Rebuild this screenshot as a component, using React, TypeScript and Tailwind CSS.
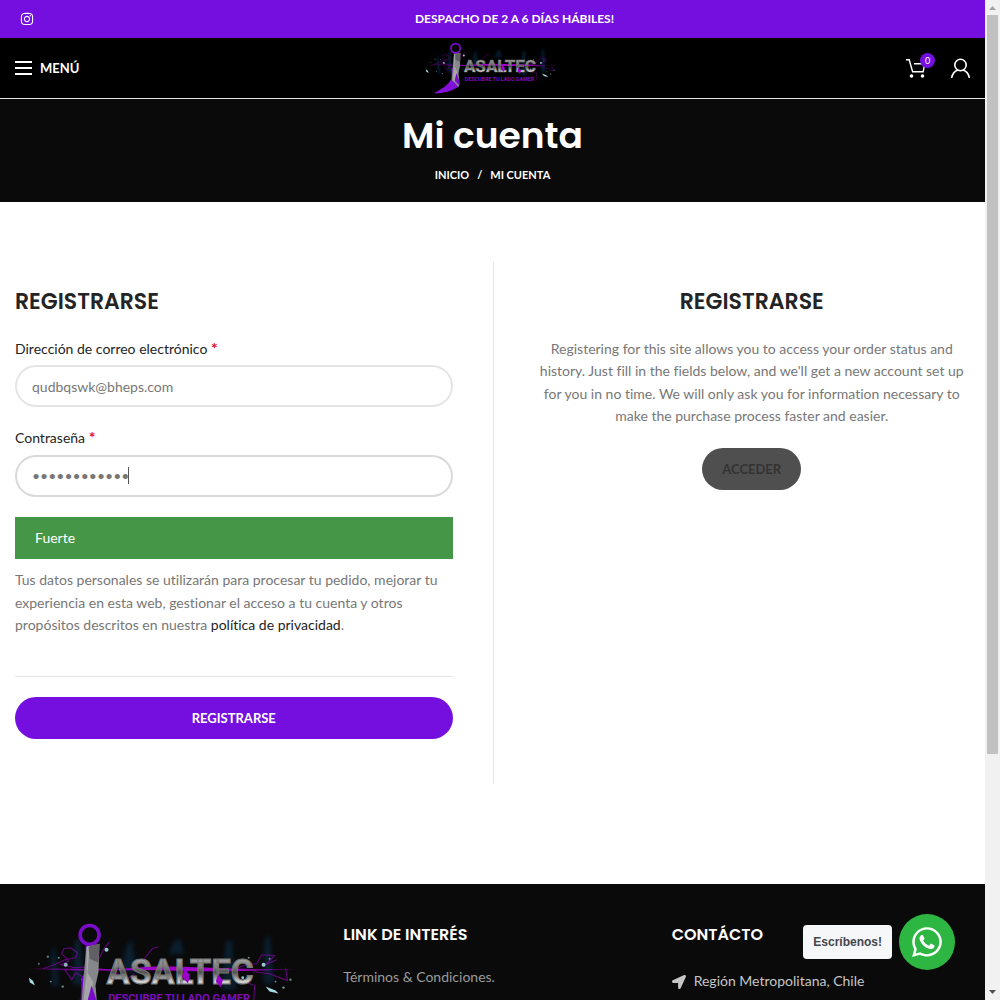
import { FaInstagram, FaLocationArrow, FaWhatsapp } from "react-icons/fa";

const sparks: [number, number, number, number][] = [
  [51, 51, 2, 0.8], [33, 43, 1.2, 0.5], [24, 50, 1, 0.5], [44, 44, 1, 0.6], [92, 36, 2, 0.9],
  [68, 66, 1.4, 0.6], [250, 51, 2, 0.9], [256, 45, 1, 0.6], [229, 64, 1.4, 0.9], [277, 66, 1.2, 0.6],
  [262, 68, 1, 0.6], [36, 68, 1, 0.6], [235, 44, 1, 0.6], [270, 74, 1.2, 0.7], [48, 73, 1.2, 0.6],
];

function Logo({ id, className }: { id: string; className: string }) {
  return (
    <svg viewBox="0 0 300 123" className={className} role="img" aria-label="Jasaltec">
      <defs>
        <linearGradient id={id + "-steel"} x1="0" y1="0" x2="0" y2="1">
          <stop offset="0.2" stopColor="#a0a0a0" />
          <stop offset="0.4" stopColor="#7a7a7a" />
          <stop offset="0.52" stopColor="#505050" />
          <stop offset="0.75" stopColor="#d2d2d2" />
          <stop offset="1" stopColor="#8a8a8a" />
        </linearGradient>
        <linearGradient id={id + "-beam"} x1="0" x2="1">
          <stop offset="0" stopColor="#a400c8" stopOpacity="0" />
          <stop offset="0.25" stopColor="#a000c8" />
          <stop offset="0.75" stopColor="#a000c8" />
          <stop offset="1" stopColor="#a400c8" stopOpacity="0" />
        </linearGradient>
        <filter id={id + "-glow"} x="-20%" y="-20%" width="140%" height="140%">
          <feGaussianBlur stdDeviation="2" />
        </filter>
      </defs>
      <g fill="#073f68" opacity="0.4" filter={"url(#" + id + "-glow)"}>
        <path d="M36 44 40 30 44 72 38 74ZM60 28 66 24 69 74 58 70ZM112 32 118 25 122 58H106ZM160 28 166 24 170 40H154ZM212 28 218 26 222 76H208ZM251 26 256 20 260 70H250Z" />
      </g>
      <path d="M10 55 C50 53 80 58 120 54 S210 57 292 55 C240 58 200 58 160 57 S60 58 10 55Z" fill={"url(#" + id + "-beam)"} />
      <g fill="none" stroke="#9c00c4" strokeWidth="1.1" opacity="0.6">
        <path d="M28 55 42 50 50 46 61 44 63 39 56 34 49 35 47 40 54 47 46 51 60 54 76 53 84 46 90 34 95 28" />
        <path d="M50 56 57 66 61 59 73 66 85 55 100 58" />
        <path d="M130 45 138 35 144 33" />
        <path d="M222 55 232 51 243 50 248 41 261 42 252 51 263 46" />
        <path d="M100 58 112 66 120 60M240 58 256 60 274 67 272 54M218 60 230 68 241 72 240 88" />
      </g>
      <g fill="#a7dce5">
        {sparks.map(([x, y, r, o]) => (
          <circle key={x + "-" + y} cx={x} cy={y} r={r} opacity={o} />
        ))}
        <path d="m14 64 4 3 2 5-5-3Zm238 9 10 4 3 3-9-2Z" />
      </g>
      <circle cx="75" cy="21" r="9.5" fill="none" stroke="#7a0bc9" strokeWidth="3.6" />
      <path d="m71 31-1 29-3 4-1 22 4 8 6-24 1-38Z" fill="#7600c9" />
      <path d="m72 33 13-3-1 28-3 14 2 24-3 6-6-8-7-6 2-26Z" fill="#86878a" />
      <path d="m72 33 3-1-2 27 6 10-3 14-4 8-3-5 3-26Z" fill="#a6a6a8" />
      <path d="m74 33 11-3-1 19-9-4Z" fill="#606064" />
      <path d="M32 112 C48 104 58 97 65 86 L72 90 80 100 C69 109 50 113 33 114Z" fill="#8210d8" />
      <path d="m77 72 5 15 0 10-9-10Z" fill="#7a0bc9" />
      <text
        x="166"
        y="70"
        textAnchor="middle"
        fontFamily="Roboto, 'Liberation Sans', sans-serif"
        fontWeight="700"
        fontSize="35"
        fill={"url(#" + id + "-steel)"}
        stroke="#777"
        strokeWidth="1"
      >
        ASALTEC
      </text>
      <path d="m170 55 6 6-2 9-6-7Zm34 6 5 5-2 8-5-6Z" fill="#9a00d0" />
      <text
        x="165"
        y="88"
        textAnchor="middle"
        fontFamily="Roboto, 'Liberation Sans', sans-serif"
        fontWeight="700"
        fontSize="11"
        fill="#7c0cb8"
      >
        DESCUBRE TU LADO GAMER
      </text>
    </svg>
  );
}

function CartIcon() {
  return (
    <svg viewBox="0 0 20 20" className="h-5 w-5" fill="none" stroke="white" strokeWidth="1.4">
      <path d="M1 1.700h3.200l3.400 12h10.600l1.500-8H9" />
      <circle cx="6.500" cy="18" r="1.8" fill="white" stroke="none" />
      <circle cx="17.500" cy="18" r="1.8" fill="white" stroke="none" />
    </svg>
  );
}

function UserIcon() {
  return (
    <svg viewBox="0 0 20 20" className="h-5 w-5" fill="none" stroke="white" strokeWidth="1.6">
      <circle cx="10.500" cy="7" r="5.7" />
      <path d="M1.500 20.500c.6-4.500 3.200-7.200 6.500-8.400M13 12.100c3.300 1.200 5.900 3.900 6.500 8.400" />
    </svg>
  );
}

function Scrollbar() {
  return (
    <div aria-hidden="true" className="flex w-[15px] shrink-0 flex-col items-center bg-[#f1f1f1]">
      <svg viewBox="0 0 15 15" className="h-[15px] w-[15px]">
        <path d="M4 10h7L7.500 6Z" fill="#a3a3a3" />
      </svg>
      <div className="flex w-full flex-1 flex-col px-0.5">
        <div className="h-[76.2%] bg-[#c1c1c1]" />
      </div>
      <svg viewBox="0 0 15 15" className="h-[15px] w-[15px]">
        <path d="M4 5h7L7.500 9Z" fill="#505050" />
      </svg>
    </div>
  );
}

const heading = "font-['Poppins','Inter',sans-serif] font-semibold";
const field =
  "block h-[42px] w-full rounded-full border-2 bg-white px-[15px] text-sm text-[#777] outline-none";

export default function App() {
  return (
    <div className="flex h-screen overflow-hidden bg-white font-['Lato',sans-serif] text-[14px] leading-[1.6] text-[#777] [font-variant-ligatures:none]">
      <div className="min-w-0 flex-1 overflow-hidden">
        <header>
          <div className="grid h-[38px] grid-cols-[1fr_auto_1fr] items-center bg-[#750fe0] px-5 text-white">
            <a href="#instagram" aria-label="Instagram" className="w-3.5">
              <FaInstagram className="h-3.5 w-3.5" />
            </a>
            <strong className="pl-11 text-xs">DESPACHO DE 2 A 6 DÍAS HÁBILES!</strong>
          </div>
          <div className="grid h-[61px] grid-cols-[1fr_auto_1fr] items-center border-b border-[#e6e6e6] bg-black px-[15px] text-white">
            <button type="button" className="flex items-center gap-2 justify-self-start text-[13px] font-bold">
              <span className="flex w-[17px] flex-col gap-1">
                <span className="h-0.5 bg-white" />
                <span className="h-0.5 bg-white" />
                <span className="h-0.5 bg-white" />
              </span>
              MENÚ
            </button>
            <a href="#inicio">
              <Logo id="top" className="h-[60px]" />
            </a>
            <div className="flex items-center gap-[25px] justify-self-end">
              <a href="#carrito" aria-label="Carrito" className="relative">
                <CartIcon />
                <span className="absolute -top-[5px] left-[15px] h-[15px] w-[15px] rounded-full bg-[#750fe0] text-center text-[9px] leading-[15px]">
                  0
                </span>
              </a>
              <a href="#cuenta" aria-label="Mi cuenta">
                <UserIcon />
              </a>
            </div>
          </div>
        </header>

        <section className="bg-[#0a0a0a] pt-[15px] pb-4 text-center text-white">
          <h1 className={heading + " text-[36px] leading-[44px]"}>Mi cuenta</h1>
          <nav className="mt-1.5 flex justify-center gap-2 text-[11px] leading-[22px] font-bold">
            <a href="#inicio">INICIO</a>
            <span>/</span>
            <span>MI CUENTA</span>
          </nav>
        </section>

        <main className="px-[15px] pt-[60px] pb-[100px]">
          <div className="grid grid-cols-2">
            <form className="pt-[25px] pr-10 pb-[45px]" onSubmit={(e) => e.preventDefault()}>
              <h2 className={heading + " mb-[21px] text-[22px] leading-[30px] text-[#242424]"}>REGISTRARSE</h2>
              <label htmlFor="email" className="mb-[5px] block text-[#242424]">
                Dirección de correo electrónico <span className="text-base leading-none font-bold text-[#e01020]">*</span>
              </label>
              <input id="email" type="email" defaultValue="qudbqswk@bheps.com" className={field + " mb-5 border-black/10"} />
              <label htmlFor="password" className="mb-[5px] block text-[#242424]">
                Contraseña <span className="text-base leading-none font-bold text-[#e01020]">*</span>
              </label>
              <div className="relative mb-5">
                <input id="password" type="password" defaultValue="abcdefghijkl" className={field + " border-black/15"} />
                <span aria-hidden="true" className="absolute top-3 left-[113px] h-[17px] w-px bg-[#555]" />
              </div>
              <div className="bg-[#459647] px-5 py-2.5 text-white">Fuerte</div>
              <p className="mt-2.5">
                Tus datos personales se utilizarán para procesar tu pedido, mejorar tu experiencia en esta web, gestionar
                el acceso a tu cuenta y otros propósitos descritos en nuestra{" "}
                <a href="#privacidad" className="text-[#242424]">
                  política de privacidad
                </a>
                .
              </p>
              <hr className="mt-10 mb-5 border-black/10" />
              <button type="submit" className="h-[42px] w-full rounded-full bg-[#750fe0] text-[13px] font-bold text-white">
                REGISTRARSE
              </button>
            </form>
            <section className="border-l border-black/10 pt-[25px] pl-10 text-center">
              <h2 className={heading + " mb-[21px] text-[22px] leading-[30px] text-[#242424]"}>REGISTRARSE</h2>
              <p>
                Registering for this site allows you to access your order status and history. Just fill in the fields
                below, and we'll get a new account set up for you in no time. We will only ask you for information
                necessary to make the purchase process faster and easier.
              </p>
              <a
                href="#acceder"
                className="mt-5 inline-block rounded-full bg-[#4f4f4f] px-5 py-2.5 text-[13px] leading-[22px] font-bold text-[#333]"
              >
                ACCEDER
              </a>
            </section>
          </div>
        </main>

        <footer className="grid grid-cols-3 bg-[#0a0a0a] pt-[30px] pb-10 text-[#9b9b9b]">
          <div className="px-[15px]">
            <Logo id="foot" className="w-full" />
          </div>
          <div className="px-[15px] pt-2">
            <h3 className={heading + " mb-[18px] text-[16px] leading-[26px] text-white"}>LINK DE INTERÉS</h3>
            <a href="#terminos">Términos &amp; Condiciones.</a>
          </div>
          <div className="px-[15px] pt-2">
            <h3 className={heading + " mb-[22px] text-[16px] leading-[26px] text-white"}>CONTÁCTO</h3>
            <p className="flex items-center gap-2 text-[#c6c6c6]">
              <FaLocationArrow className="h-3.5 w-3.5" />
              Región Metropolitana, Chile
            </p>
          </div>
        </footer>
      </div>
      <Scrollbar />

      <a
        href="#whatsapp"
        className="fixed right-[45px] bottom-[30px] flex items-center gap-[7px] font-['Liberation_Sans',sans-serif] text-[12px] leading-[22px] font-bold text-[#43474e]"
      >
        <span className="rounded bg-[#f5f7f9] px-2.5 py-1.5">Escríbenos!</span>
        <span className="flex h-14 w-14 items-center justify-center rounded-full bg-[#2db742] text-white">
          <FaWhatsapp className="h-[34px] w-[34px]" />
        </span>
      </a>
    </div>
  );
}
